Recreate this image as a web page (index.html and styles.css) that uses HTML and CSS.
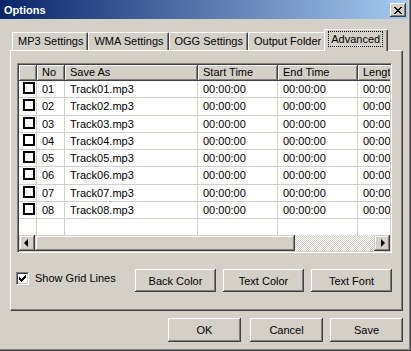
FILE: index.html
```html
<!DOCTYPE html>
<html>

<head>
    <meta charset="UTF-8">
    <link rel="stylesheet" href="styles.css">
</head>

<body>
    <div class="window">
        <div class="titlebar">
            <span class="title">Options</span>
            <span class="close">
                <svg width="8" height="7" viewBox="0 0 8 7" shape-rendering="crispEdges">
                    <path d="M0 0h2v1h-2zM6 0h2v1h-2zM1 1h2v1h-2zM5 1h2v1h-2zM2 2h4v1h-4zM3 3h2v1h-2zM2 4h4v1h-4zM1 5h2v1h-2zM5 5h2v1h-2zM0 6h2v1h-2zM6 6h2v1h-2z" fill="#000"/>
                </svg>
            </span>
        </div>

        <div class="tabs">
            <div class="tab">MP3 Settings</div>
            <div class="tab">WMA Settings</div>
            <div class="tab">OGG Settings</div>
            <div class="tab">Output Folder</div>
            <div class="tab active"><span class="focus">Advanced</span></div>
        </div>

        <div class="panel">
            <div class="list">
                <div class="grid">
                    <div class="row head">
                        <div class="cell"></div>
                        <div class="cell">No</div>
                        <div class="cell">Save As</div>
                        <div class="cell">Start Time</div>
                        <div class="cell">End Time</div>
                        <div class="cell">Length</div>
                    </div>
                    <div class="row"><div class="cell"><span class="tick"></span></div><div class="cell">01</div><div class="cell">Track01.mp3</div><div class="cell">00:00:00</div><div class="cell">00:00:00</div><div class="cell">00:00:00</div></div>
                    <div class="row"><div class="cell"><span class="tick"></span></div><div class="cell">02</div><div class="cell">Track02.mp3</div><div class="cell">00:00:00</div><div class="cell">00:00:00</div><div class="cell">00:00:00</div></div>
                    <div class="row"><div class="cell"><span class="tick"></span></div><div class="cell">03</div><div class="cell">Track03.mp3</div><div class="cell">00:00:00</div><div class="cell">00:00:00</div><div class="cell">00:00:00</div></div>
                    <div class="row"><div class="cell"><span class="tick"></span></div><div class="cell">04</div><div class="cell">Track04.mp3</div><div class="cell">00:00:00</div><div class="cell">00:00:00</div><div class="cell">00:00:00</div></div>
                    <div class="row"><div class="cell"><span class="tick"></span></div><div class="cell">05</div><div class="cell">Track05.mp3</div><div class="cell">00:00:00</div><div class="cell">00:00:00</div><div class="cell">00:00:00</div></div>
                    <div class="row"><div class="cell"><span class="tick"></span></div><div class="cell">06</div><div class="cell">Track06.mp3</div><div class="cell">00:00:00</div><div class="cell">00:00:00</div><div class="cell">00:00:00</div></div>
                    <div class="row"><div class="cell"><span class="tick"></span></div><div class="cell">07</div><div class="cell">Track07.mp3</div><div class="cell">00:00:00</div><div class="cell">00:00:00</div><div class="cell">00:00:00</div></div>
                    <div class="row"><div class="cell"><span class="tick"></span></div><div class="cell">08</div><div class="cell">Track08.mp3</div><div class="cell">00:00:00</div><div class="cell">00:00:00</div><div class="cell">00:00:00</div></div>
                    <div class="row empty"><div class="cell"></div><div class="cell"></div><div class="cell"></div><div class="cell"></div><div class="cell"></div><div class="cell"></div></div>
                </div>
                <div class="hscroll">
                    <span class="sbtn"><i class="arrow left"></i></span>
                    <span class="thumb"></span>
                    <span class="track"></span>
                    <span class="sbtn"><i class="arrow right"></i></span>
                </div>
            </div>

            <div class="options">
                <label class="check">
                    <span class="box">
                        <svg width="7" height="7" viewBox="0 0 7 7" shape-rendering="crispEdges">
                            <path d="M6 0h1v3h-1zM5 1h1v3h-1zM4 2h1v3h-1zM3 3h1v3h-1zM2 4h1v3h-1zM1 3h1v3h-1zM0 2h1v3h-1z" fill="#000"/>
                        </svg>
                    </span>
                    <span class="label">Show Grid Lines</span>
                </label>
                <div class="actions">
                    <button class="btn">Back Color</button>
                    <button class="btn">Text Color</button>
                    <button class="btn">Text Font</button>
                </div>
            </div>
        </div>

        <div class="footer">
            <button class="btn small ok">OK</button>
            <button class="btn small">Cancel</button>
            <button class="btn small">Save</button>
        </div>
    </div>
</body>

</html>
```

FILE: styles.css
```css
body {
    margin: 0;
    background-color: #d4d0c8;
    font-family: "Liberation Sans", Arial, sans-serif;
    font-size: 11px;
    color: #000;
}

.window {
    width: 411px;
    height: 351px;
    box-sizing: border-box;
    border-right: 1px solid #404040;
    border-bottom: 1px solid #404040;
    box-shadow: inset -1px -1px #808080;
}

/* title bar */
.titlebar {
    height: 19px;
    margin-right: 2px;
    display: flex;
    justify-content: space-between;
    align-items: flex-start;
    background: linear-gradient(to right, #0a246a, #a6caf0);
}

.title {
    color: #fff;
    font-weight: bold;
    line-height: 13px;
    padding: 4px 0 0 4px;
}

.close {
    width: 16px;
    height: 14px;
    margin: 3px 2px 0 0;
    box-sizing: border-box;
    display: flex;
    align-items: center;
    justify-content: center;
    padding-right: 1px;
    background-color: #d4d0c8;
    box-shadow: inset -1px -1px #404040, inset 1px 1px #fff, inset -2px -2px #808080;
}

/* tabs */
.tabs {
    height: 21px;
    margin-top: 10px;
    padding-left: 12px;
    display: flex;
    align-items: flex-end;
}

.tab {
    height: 18px;
    box-sizing: border-box;
    padding: 0 4px 0 5px;
    line-height: 17px;
    border-top: 1px solid #fff;
    border-left: 1px solid #fff;
    border-right: 1px solid #404040;
    border-radius: 2px 2px 0 0;
    box-shadow: inset -1px 0 #808080;
    white-space: nowrap;
}

.tab.active {
    position: relative;
    z-index: 1;
    height: 22px;
    margin: 0 -2px -1px -2px;
    padding: 1px 4px 0 3px;
    background-color: #d4d0c8;
    line-height: 14px;
}

.focus {
    display: inline-block;
    padding: 0 2px;
    border: 1px dotted #000;
}

/* page */
.panel {
    margin-left: 10px;
    width: 393px;
    height: 261px;
    box-sizing: border-box;
    padding: 12px 0 0 6px;
    border-top: 1px solid #fff;
    border-left: 1px solid #fff;
    border-right: 1px solid #404040;
    border-bottom: 1px solid #404040;
    box-shadow: inset -1px -1px #808080;
}

.list {
    width: 375px;
    height: 190px;
    box-sizing: border-box;
    padding: 1px;
    border: 1px solid;
    border-color: #808080 #fff #fff #808080;
    box-shadow: inset 1px 1px #404040, inset -1px -1px #d4d0c8;
    background-color: #fff;
    display: flex;
    flex-direction: column;
    overflow: hidden;
}

.grid {
    flex: 1;
    overflow: hidden;
}

.row {
    display: grid;
    grid-template-columns: 18px 28px 133px 80px 80px 80px;
    height: 17.25px;
}

.cell {
    box-sizing: border-box;
    padding: 1px 0 0 5px;
    line-height: 15px;
    border-right: 1px solid #d4d0c8;
    border-bottom: 1px solid #d4d0c8;
    white-space: nowrap;
    overflow: hidden;
}

.row.head {
    height: 16px;
}

.head .cell {
    padding-top: 0;
    line-height: 15px;
    background-color: #d4d0c8;
    border-right-color: #404040;
    border-bottom-color: #404040;
    box-shadow: inset 1px 1px #fff, inset -1px -1px #808080;
}

.row.empty .cell {
    border-bottom: 0;
}

.tick {
    display: block;
    width: 12px;
    height: 12px;
    box-sizing: border-box;
    margin: 0 0 0 -1px;
    border: 2px solid #000;
    background-color: #fff;
}

/* horizontal scroll bar */
.hscroll {
    height: 16px;
    display: flex;
}

.sbtn,
.thumb {
    box-sizing: border-box;
    background-color: #d4d0c8;
    box-shadow: inset -1px -1px #404040, inset 1px 1px #d4d0c8, inset -2px -2px #808080, inset 2px 2px #fff;
}

.sbtn {
    width: 16px;
    display: flex;
    align-items: center;
    justify-content: center;
}

.thumb {
    width: 260px;
}

.track {
    flex: 1;
    background: repeating-conic-gradient(#fff 0 25%, #d4d0c8 0 50%) 0 0 / 2px 2px;
}

.arrow {
    width: 0;
    height: 0;
    border-top: 4px solid transparent;
    border-bottom: 4px solid transparent;
}

.arrow.left {
    border-right: 4px solid #000;
    margin-right: 2px;
}

.arrow.right {
    border-left: 4px solid #000;
    margin-left: 1px;
}

/* options row */
.options {
    width: 375px;
    padding-top: 16px;
    display: flex;
    justify-content: space-between;
    align-items: flex-start;
}

.check {
    margin: 3px 0 0 -1px;
    display: flex;
    align-items: flex-start;
}

.box {
    width: 13px;
    height: 13px;
    box-sizing: border-box;
    border: 1px solid;
    border-color: #808080 #fff #fff #808080;
    box-shadow: inset 1px 1px #404040, inset -1px -1px #d4d0c8;
    background-color: #fff;
    display: flex;
    align-items: center;
    justify-content: center;
}

.label {
    margin-left: 6px;
    line-height: 12px;
}

.actions {
    display: flex;
    gap: 7px;
}

.btn {
    width: 81px;
    height: 23px;
    padding: 0;
    border: 0;
    font: inherit;
    color: #000;
    background-color: #d4d0c8;
    box-shadow: inset -1px -1px #404040, inset 1px 1px #fff, inset -2px -2px #808080;
}

/* dialog buttons */
.footer {
    margin-top: 7px;
    padding-right: 7px;
    display: flex;
    justify-content: flex-end;
    gap: 7px;
}

.btn.small {
    width: 73px;
    height: 24px;
}

.btn.ok {
    margin-right: 2px;
}
```
